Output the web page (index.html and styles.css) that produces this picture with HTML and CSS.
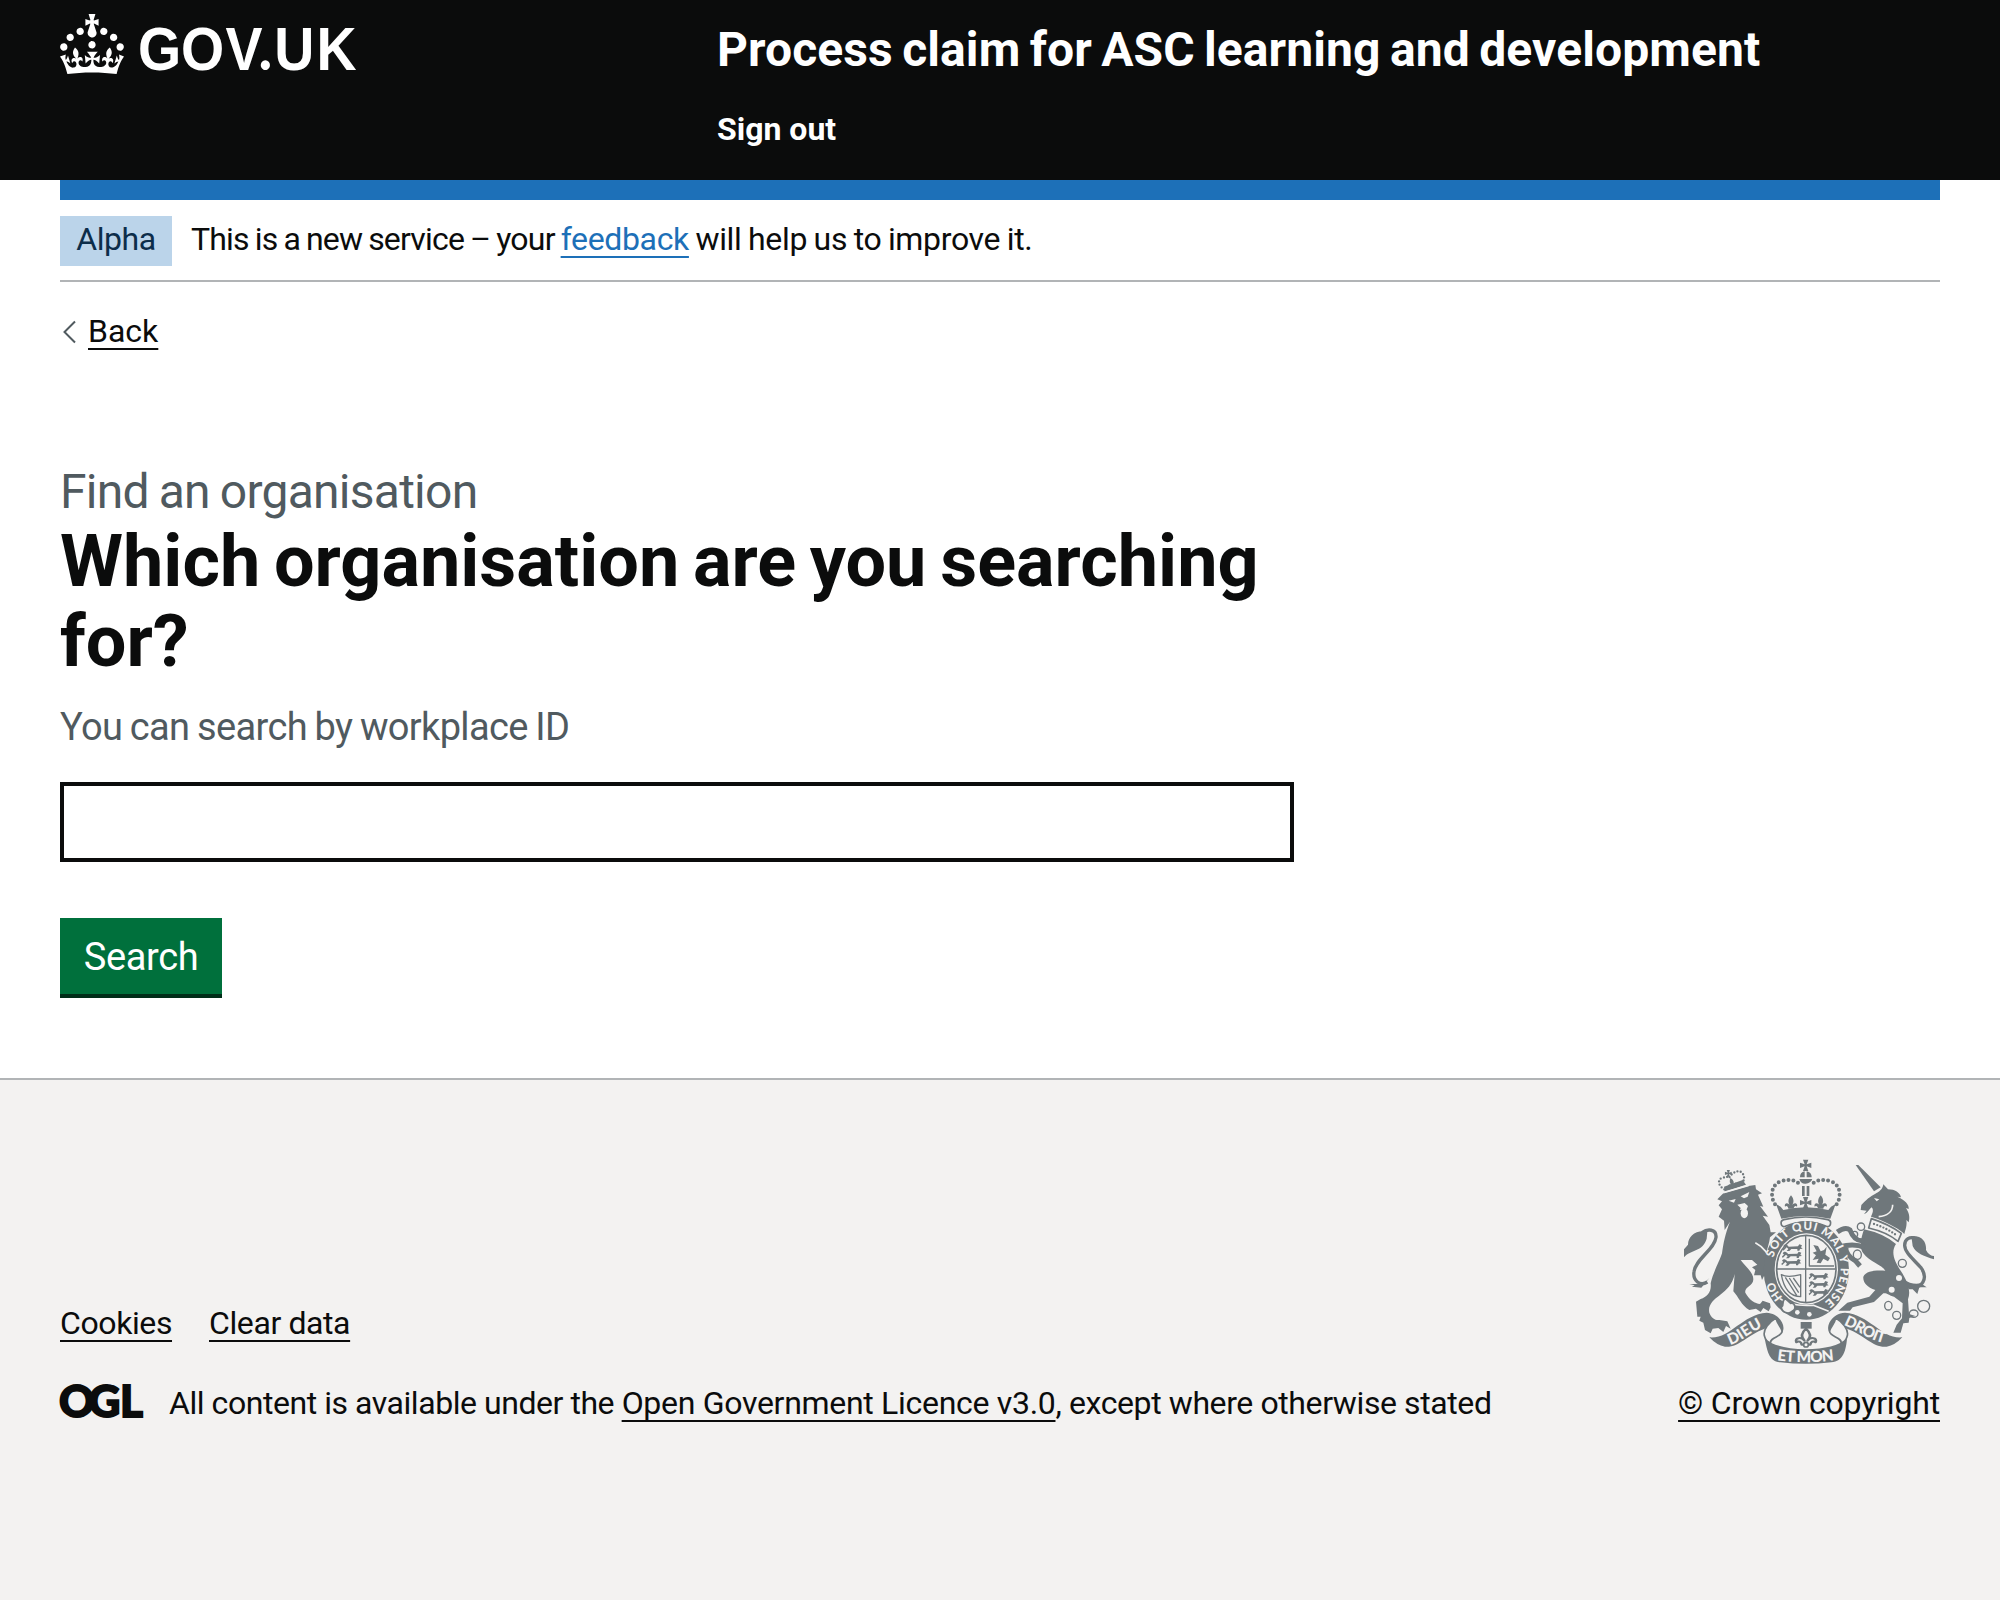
FILE: index.html
```html
<!DOCTYPE html>
<html lang="en">
<head>
<meta charset="utf-8">
<title>Which organisation are you searching for?</title>
<link rel="stylesheet" href="styles.css">
</head>
<body>
<header class="header">
  <a class="header-logo" href="#">
    <svg class="logo" viewBox="0 0 300 60" width="300" height="60">
      <path transform="scale(2)" d="M22.6 10.4c-1 .4-2-.1-2.4-1-.4-.9.1-2 1-2.4.9-.4 2 .1 2.4 1s-.1 2-1 2.4m-5.9 6.7c-.9.4-2-.1-2.4-1-.4-.9.1-2 1-2.4.9-.4 2 .1 2.4 1s-.1 2-1 2.4m10.8-3.7c-1 .4-2-.1-2.4-1-.4-.9.1-2 1-2.4.9-.4 2 .1 2.4 1s0 2-1 2.4m3.3 4.8c-1 .4-2-.1-2.4-1-.4-.9.1-2 1-2.4.9-.4 2 .1 2.4 1s-.1 2-1 2.4M17 4.7l2.3 1.2V2.5l-2.3.7-.2-.2.9-3h-3.4l.9 3-.2.2c-.1.1-2.3-.7-2.3-.7v3.4L15 4.7c.1.1.1.2.2.2l-1.3 4c-.1.2-.1.4-.1.6 0 1.1.8 2 1.9 2.2h.7c1-.2 1.9-1.1 1.9-2.1 0-.2 0-.4-.1-.6l-1.3-4c-.1-.2 0-.2.1-.3m-7.6 5.7c.9.4 2-.1 2.4-1 .4-.9-.1-2-1-2.4-.9-.4-2 .1-2.4 1s0 2 1 2.4m-5 3c.9.4 2-.1 2.4-1 .4-.9-.1-2-1-2.4-.9-.4-2 .1-2.4 1s.1 2 1 2.4m-3.2 4.8c.9.4 2-.1 2.4-1 .4-.9-.1-2-1-2.4-.9-.4-2 .1-2.4 1s0 2 1 2.4m14.8 11c4.4 0 8.6.3 12.3.8 1.1-4.5 2.4-7 3.7-8.8l-2.5-.9c.2 1.3.3 1.9 0 2.7-.4-.4-.8-1.1-1.1-2.3l-1.2 4c.7-.5 1.3-.8 2-.9-1.1 2.5-2.6 3.1-3.5 3-1.1-.2-1.7-1.2-1.5-2.1.3-1.2 1.5-1.5 2.1-.1 1.1-2.3-.8-3-2-2.3 1.9-1.9 2.1-3.5.6-5.6-2.1 1.6-2.1 3.2-1.2 5.5-1.2-1.4-3.2-.6-2.5 1.6.9-1.4 2.1-.5 1.9.8-.2 1.1-1.7 2.1-3.5 1.9-2.7-.2-2.9-2.1-2.9-3.6.7-.1 1.9.5 2.9 1.9l.4-4.3c-1.1 1.1-2.1 1.4-3.2 1.4.4-1.2 2.1-3 2.1-3h-5.4s1.7 1.9 2.1 3c-1.1 0-2.1-.2-3.2-1.4l.4 4.3c1-1.4 2.2-2 2.9-1.9-.1 1.5-.2 3.4-2.9 3.6-1.9.2-3.4-.8-3.5-1.9-.2-1.3 1-2.2 1.9-.8.7-2.3-1.2-3-2.5-1.6.9-2.2.9-3.9-1.2-5.5-1.5 2-1.3 3.7.6 5.6-1.2-.7-3.1 0-2 2.3.6-1.4 1.8-1.1 2.1.1.2.9-.3 1.9-1.5 2.1-.9.2-2.4-.5-3.5-3 .6 0 1.2.3 2 .9l-1.2-4c-.3 1.1-.7 1.9-1.1 2.3-.3-.8-.2-1.4 0-2.7l-2.9.9C1.3 23 2.6 25.5 3.7 30c3.7-.5 7.9-.8 12.3-.8"/>
      <text class="logo-text" transform="scale(.91 1)" y="56" x="85.8 133 182 218.5 235.5 282">GOV<tspan class="logo-dot">.</tspan>UK</text>
    </svg>
  </a>
  <div class="header-content">
    <a class="service-name" href="#">Process claim for ASC learning and development</a>
    <a class="sign-out" href="#">Sign out</a>
  </div>
</header>

<div class="container">
  <div class="phase-banner">
    <strong class="tag">Alpha</strong>
    <span class="phase-text"><span class="phase-lead">This is a new service – your </span><a class="link" href="#">feedback</a><span class="phase-tail"> will help us to improve it.</span></span>
  </div>
  <a class="back" href="#">
    <svg class="back-arrow" viewBox="0 0 28 40" width="28" height="40"><path d="M15 10.5 4.5 21 15 31.5"/></svg>
    <span class="back-text">Back</span>
  </a>
  <main class="main">
    <span class="caption">Find an organisation</span>
    <h1 class="title">Which organisation are you searching for?</h1>
    <div class="hint">You can search by workplace ID</div>
    <input class="input" type="text" aria-label="Workplace ID">
    <button class="button">Search</button>
  </main>
</div>

<footer class="footer">
  <div class="footer-meta">
    <div class="footer-links">
      <a class="footer-link" href="#">Cookies</a>
      <a class="footer-link" href="#">Clear data</a>
    </div>
    <div class="licence">
      <svg class="ogl" viewBox="0 0 84 36" width="84" height="36"><text class="ogl-text" y="33.5" x="-1 28.5 60">OGL</text></svg>
      <span class="licence-text"><span class="licence-lead">All content is available under the </span><a class="footer-link licence-link" href="#">Open Government Licence v3.0</a>, except where otherwise stated</span>
    </div>
  </div>
  <div class="copyright">
    <svg class="crest" viewBox="42 27 750 615" width="250" height="205">
      <defs>
        <path id="motto" d="M306 357A103 117 0 0 1 512 357A103 117 0 0 1 306 357"/>
        <path id="dieu" d="M180 584C215 576 240 545 290 526"/>
        <path id="droit" d="M520 525C560 538 595 572 655 582"/>
        <path id="etmon" d="M318 630Q408 643 500 630"/>
        <path id="fleur" d="M0-20C10-8 9 2 3 10C8 0 22 2 18 14C14 10 9 12 8 20H-8C-9 12-14 10-18 14C-22 2-8 0-3 10C-9 2-10-8 0-20Z"/>
        <path id="cross" d="M-8-17H8L3-3 17-8V8L3 3 8 17H-8L-3 3-17 8V-8L-3-3Z"/>
        <path id="passant" d="M2 8C8 0 14 4 18 10L46 9 50 3 58 6 55 12 60 16 52 17 50 22H44L44 17H26L20 23H12L17 17 12 12 8 16 2 22 0 17 6 12Z"/>
      </defs>

      <!-- lion -->
      <path d="M142 148L160 130 235 108 256 105 258 118 276 130 264 134 280 170 270 168 294 200 278 197 298 225 302 247 318 247 300 262C298 280 292 294 290 306L306 332 318 372 308 385 300 372 296 388 282 378 276 390 272 376 252 376 256 360 246 352 262 344 246 330 212 330C225 350 250 365 250 388C250 408 222 412 226 428C238 450 255 460 270 462L278 452 300 460 302 472 296 484 280 474 272 486 258 476 238 480C215 468 205 440 190 424L194 372C188 402 170 420 150 435C130 450 113 465 118 488C124 504 136 512 148 510L172 514 182 536 168 528 160 546 145 534 128 536 122 550 105 540 100 518 88 512 92 500 82 500 78 455 92 447C112 440 125 425 122 400C128 370 150 330 156 310C160 280 166 250 180 215L164 240 162 212 146 200 156 178 146 166 156 154Z"/>
      <path d="M162 110L218 90 228 104 164 125Z"/>
      <path class="beads small" d="M163 118C140 105 145 85 158 83S174 78 177 84C190 62 212 58 219 72S220 90 219 98"/>
      <use href="#cross" transform="translate(175 70) scale(.6)"/>
      <use href="#fleur" transform="translate(186 98) rotate(-18) scale(.75)"/>
      <g class="paper">
        <path d="M176 152L197 147 192 158ZM212 139L238 126 233 140 222 145ZM202 164L224 159 234 168 230 178 210 180 212 174Z"/>
        <ellipse cx="223" cy="190" rx="11" ry="15"/>
      </g>
      <path class="paper-line" d="M256 278C280 290 298 312 312 350M160 128L236 106"/>
      <path class="limb tail" d="M112 396C90 410 68 392 72 365C76 328 134 298 138 262C140 236 112 236 96 248"/>
      <path d="M112 245C78 238 54 258 54 284L42 298V322C62 298 98 306 110 266ZM118 384L100 402 58 402 74 406 66 410 94 413Z"/>

      <!-- unicorn -->
      <path d="M557 45H565L632 112 612 124Z"/>
      <path d="M640 103L654 118C675 118 690 128 693 142L682 140C705 150 718 164 716 177L708 174C718 190 720 202 716 217L709 210C712 226 706 240 703 252C690 238 660 222 622 206L603 200C608 190 612 180 605 172C598 176 594 190 582 192L590 182 572 180 574 165C590 148 600 140 615 132C628 125 638 118 640 103Z"/>
      <path class="paper-line" d="M668 164C668 186 650 198 626 200"/>
      <path class="paper" d="M612 144L628 148 620 154Z"/>
      <path class="rim" d="M604 206Q655 222 694 250L684 274Q650 246 596 234Z"/>
      <path class="beads small" d="M612 222Q650 234 680 256"/>
      <path d="M582 238Q640 250 678 282C662 306 672 332 692 362C712 392 724 422 714 448L717 492 736 498 718 504 716 518 700 520 692 548 670 548 680 524 696 505 698 460 672 440C656 436 650 428 640 430L612 456 548 472 540 482H505L532 458 598 440 616 420C590 412 578 396 580 380C588 362 618 360 646 362C636 345 596 334 580 310C566 290 574 262 582 238Z"/>
      <path class="limb" d="M584 272C560 276 548 262 540 240C530 232 516 236 502 246M584 292C560 282 540 282 510 290M528 288C524 306 540 324 556 332L570 348"/>
      <path class="limb tail" d="M716 408C758 420 776 384 752 352C728 326 704 306 704 286C704 266 720 260 734 264"/>
      <path d="M724 258C760 256 770 280 768 300C774 312 784 318 792 318V328C764 318 738 312 728 288ZM702 388C716 400 736 404 752 400L770 412 748 412 742 432 728 418 716 418Z"/>
      <g class="chain">
        <circle cx="573" cy="230" r="11"/><circle cx="554" cy="253" r="9"/><ellipse cx="562" cy="314" rx="12" ry="14"/>
        <circle cx="697" cy="340" r="12"/><ellipse cx="655" cy="467" rx="11" ry="13"/><circle cx="680" cy="496" r="12"/>
        <ellipse cx="731" cy="491" rx="13" ry="11"/><circle cx="761" cy="469" r="18"/>
      </g>
      <g class="paper"><circle cx="687" cy="384" r="9"/><circle cx="665" cy="419" r="9"/></g>

      <!-- crown -->
      <use href="#cross" x="407" y="46"/>
      <path d="M390 82A18 18 0 0 1 404 64V82ZM410 64A18 18 0 0 1 425 82H410ZM388 87H427Q422 100 407 101T388 87ZM396 108H404V138H396ZM410 108H418V138H410Z"/>
      <path class="beads" d="M315 163C300 140 303 104 332 94S384 94 392 106M500 163C515 140 512 104 483 94S431 94 423 106"/>
      <use href="#fleur" x="363" y="156"/><use href="#fleur" x="452" y="156"/><use href="#cross" x="407" y="158"/>
      <path d="M318 162L332 170 340 180Q407 164 475 180L483 170 497 162 481 206Q407 190 334 206Z"/>
      <path class="rim" d="M342 209C328 212 332 234 346 229C384 212 432 212 469 229C483 234 487 212 473 209Q407 193 342 209Z"/>

      <!-- garter and shield -->
      <ellipse cx="409" cy="361" rx="128" ry="148"/>
      <ellipse class="paper" cx="409" cy="357" rx="95" ry="107"/>
      <ellipse class="rim" cx="409" cy="357" rx="89" ry="101"/>
      <path class="rule" d="M407 257V458M320 357H497M418 266V348H492"/>
      <use href="#passant" x="338" y="280"/><use href="#passant" x="336" y="302"/><use href="#passant" x="334" y="324"/>
      <use href="#passant" x="416" y="366"/><use href="#passant" x="416" y="390"/><use href="#passant" x="416" y="414"/>
      <path d="M430 285L444 288 452 304 462 300 470 290 466 314 480 324 474 334 460 326 452 340 440 338 446 326 428 330 438 316 428 308 440 304Z"/>
      <path class="harp" d="M334 374Q352 384 392 374V440Q346 440 334 374ZM346 382L380 436M358 384L386 428M370 384L390 412"/>
      <path class="paper-line" d="M330 446Q360 470 430 466L476 484"/>
      <g class="paper"><circle cx="382" cy="487" r="7"/><circle cx="418" cy="493" r="7"/></g>
      <path class="rim" d="M346 446C332 452 346 462 334 472C336 488 356 494 366 484C380 478 376 458 362 460Z"/>
      <text class="motto"><textPath href="#motto" startOffset="34" textLength="426">SOIT QUI MAL Y PENSE</textPath></text>
      <text class="motto"><textPath href="#motto" startOffset="598">HO</textPath></text>

      <!-- scroll -->
      <path d="M392 516H425V536H392Z"/>
      <use class="rim" href="#fleur" transform="translate(408 560) scale(1.6 1.2)"/><circle class="rim" cx="408" cy="584" r="7"/>
      <path d="M118 562C180 568 215 494 290 488C330 490 350 530 336 548L318 540C312 526 296 526 284 536C230 556 205 594 165 590Q140 586 118 562Z"/>
      <path d="M697 562C635 568 600 494 525 488C485 490 465 530 479 548L497 540C503 526 519 526 531 536C585 556 610 594 650 590Q675 586 697 562Z"/>
      <path class="rim" d="M318 504C300 514 276 540 284 560Q288 574 302 580C296 562 340 560 336 542C332 528 322 524 318 504ZM497 504C515 514 539 540 531 560Q527 574 513 580C519 562 475 560 479 542C483 528 493 524 497 504Z"/>
      <path d="M284 566Q320 596 407 598Q495 596 531 566C528 600 520 634 484 637Q407 646 331 637C295 634 292 600 284 566Z"/>
      <text class="scroll-text"><textPath href="#dieu" textLength="112">DIEU</textPath></text>
      <text class="scroll-text"><textPath href="#droit" textLength="134">DROIT</textPath></text>
      <text class="scroll-text"><textPath href="#etmon" startOffset="3" textLength="172">ET MON</textPath></text>
    </svg>
    <a class="footer-link copyright-link" href="#">© Crown copyright</a>
  </div>
</footer>
</body>
</html>
```
FILE: styles.css
```css
* { box-sizing: border-box; }
body {
  margin: 0;
  min-height: 1600px;
  display: flex;
  flex-direction: column;
  background: #fff;
  color: #0b0c0c;
  font: 32px/40px Roboto, "Liberation Sans", sans-serif;
}

/* header */
.header {
  height: 180px;
  padding: 0 60px;
  display: grid;
  grid-template-columns: 657px 1fr;
  background: #0b0c0c;
}
.header a { color: #fff; text-decoration: none; font-weight: 700; }
.header-logo { padding-top: 14px; }
.logo { display: block; fill: #fff; overflow: visible; }
.logo-text { font: 700 61px "Liberation Sans", sans-serif; }
.logo-dot { font-family: Lato, sans-serif; font-weight: 900; }
.header-content { display: flex; flex-direction: column; align-items: flex-start; padding-top: 20px; }
.service-name { font-size: 48px; line-height: 60px; letter-spacing: .1px; word-spacing: -2.7px; }
.sign-out { margin-top: 29px; }

/* page body */
.container { padding: 0 60px; }
.phase-banner {
  display: flex;
  align-items: flex-start;
  height: 102px;
  padding-top: 16px;
  border-top: 20px solid #1d70b8;
  border-bottom: 2px solid #b1b4b6;
}
.tag {
  width: 112px;
  height: 50px;
  margin-right: 19px;
  line-height: 46px;
  text-align: center;
  font-weight: 400;
  letter-spacing: -.4px;
  background: #bbd4ea;
  color: #0c2d4a;
}
.phase-text { line-height: 46px; white-space: pre; }
.phase-lead { letter-spacing: -.8px; word-spacing: -1.2px; }
.phase-tail { letter-spacing: -.35px; word-spacing: -1px; }
.link, .back-text, .footer-link {
  text-decoration: underline;
  text-decoration-thickness: 2px;
  text-underline-offset: 6px;
  text-decoration-skip-ink: none;
}
.link { color: #1d70b8; letter-spacing: -.35px; }
.back { display: flex; width: max-content; margin-top: 29px; color: #0b0c0c; text-decoration: none; }
.back-arrow { fill: none; stroke: #505a5f; stroke-width: 2; }

.main { width: 1234px; margin-top: 111px; display: flex; flex-direction: column; align-items: flex-start; }
.caption { font-size: 48px; line-height: 60px; letter-spacing: -.75px; word-spacing: -1.2px; color: #505a5f; }
.title { margin: 0; font-size: 72px; line-height: 80px; letter-spacing: 0; word-spacing: -4.2px; font-weight: 700; }
.hint { margin-top: 20px; padding-top: 1px; font-size: 38px; line-height: 49px; letter-spacing: -.65px; word-spacing: -1.2px; color: #505a5f; }
.input { width: 100%; height: 80px; margin-top: 30px; border: 4px solid #0b0c0c; border-radius: 0; background: #fff; }
.button {
  width: 162px;
  height: 80px;
  margin-top: 56px;
  padding: 2px 0 0;
  border: 0;
  border-bottom: 4px solid #002d18;
  background: #00703c;
  color: #fff;
  font: 38px/74px Roboto, "Liberation Sans", sans-serif;
  letter-spacing: -.4px;
}

/* footer */
.footer {
  flex: 1;
  margin-top: 80px;
  padding: 79px 60px 0;
  display: flex;
  justify-content: space-between;
  align-items: flex-start;
  border-top: 2px solid #b1b4b6;
  background: #f3f2f1;
}
.footer-link { color: #0b0c0c; letter-spacing: -.4px; }
.footer-meta { padding-top: 144px; }
.footer-links { display: flex; gap: 37px; }
.licence { display: flex; margin-top: 40px; }
.ogl { margin-right: 25px; overflow: visible; }
.ogl-text { font: 900 44px Lato, sans-serif; fill: #0b0c0c; stroke: #0b0c0c; stroke-width: 1.8; }
.licence-text { white-space: pre; letter-spacing: -.4px; }
.licence-lead { letter-spacing: -.45px; }
.licence-link { letter-spacing: -.3px; }
.copyright { display: flex; flex-direction: column; align-items: center; }
.copyright-link { margin-top: 19px; letter-spacing: -.18px; }

/* royal coat of arms */
.crest { display: block; fill: #6f777b; stroke-linejoin: round; }
.crest .paper { fill: #f3f2f1; }
.paper-line { fill: none; stroke: #f3f2f1; stroke-width: 5; }
.beads { fill: none; stroke: #6f777b; stroke-width: 12; stroke-linecap: round; stroke-dasharray: 0 15; }
.beads.small { stroke-width: 7; stroke-dasharray: 0 10; }
.limb { fill: none; stroke: #6f777b; stroke-width: 15; }
.limb.tail { stroke-width: 10; }
.rim { fill: #f3f2f1; stroke: #6f777b; stroke-width: 5; }
.rule, .harp, .chain { fill: none; stroke: #6f777b; stroke-width: 4; }
.motto, .scroll-text { font: 900 35px Lato, sans-serif; fill: #f3f2f1; }
.scroll-text { font-size: 46px; }
```
